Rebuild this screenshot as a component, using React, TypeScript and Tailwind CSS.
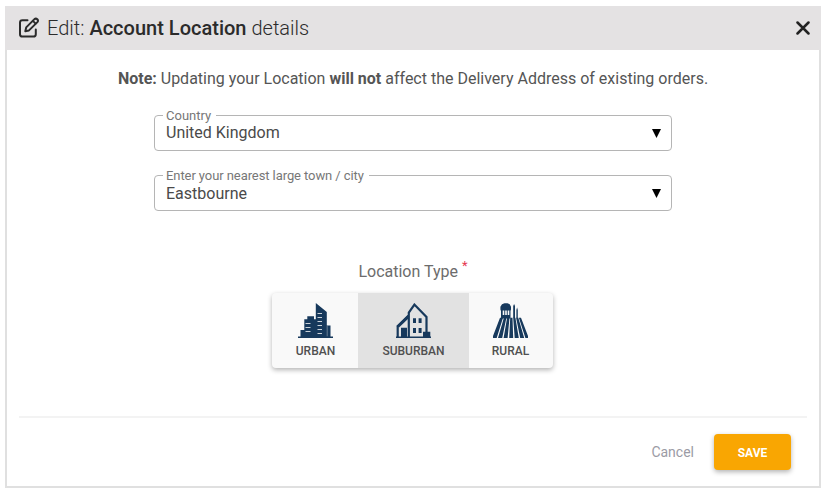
import React from 'react';

function EditIcon() {
  return (
    <svg className="h-[22px] w-[22px]" viewBox="0 0 22 22" fill="none" stroke="#2b2b2b" strokeWidth="2" strokeLinecap="round" strokeLinejoin="round">
      <path d="M9.5 3.2H4.4Q2 3.2 2 5.6V17.2Q2 19.6 4.4 19.6H15.4Q17.8 19.6 17.8 17.2V12.6" />
      <path d="M7.3 14.2L8.2 10.4L16.5 2.1Q17.9 1 19.3 2.3Q20.6 3.7 19.4 5.1L11 13.4Z" />
      <path d="M14.9 3.9L17.6 6.6" />
    </svg>
  );
}

function UrbanIcon() {
  return (
    <svg className="h-[35px] w-[35px]" viewBox="0 0 35 35">
      <path fill="#17395c" d="M0 35V33.5H2.5V27H6.3V16.3H9.3V13.3H16V16.3H17.8V0L28.8 9V22.5H32.5V33.5H35V35Z" />
      <path stroke="#f9f9f9" strokeWidth="1" opacity=".8" d="M7.5 20.5H12.5M7.5 24.5H12.5M7.5 28.5H12.5M19.5 10.5H24M19.5 14.5H24M19.5 18.5H24M19.5 22.5H24M19.5 26.5H24M19.5 30.5H24" />
      <path stroke="#f9f9f9" strokeWidth=".7" d="M29.2 23V33.3" opacity=".5" />
    </svg>
  );
}

function SuburbanIcon() {
  return (
    <svg className="h-[35px] w-[35px]" viewBox="0 0 35 35">
      <path fill="none" stroke="#17395c" strokeWidth="2.2" d="M1 23.8L12.8 12.2V9.5L18.4 1.6L30.5 14V29M1.7 23V34M12.8 11V34" />
      <path fill="#17395c" d="M0 33.4H35V35H0ZM5 24.8H11V34H5ZM27 28.7H34.3V34H27ZM17 15.2H20V20H17ZM22.6 15.2H25.6V20H22.6ZM17 25H20V30H17ZM22.6 25H25.6V30H22.6Z" />
      <path fill="#17395c" d="M1 23L13 11V15L3 24.5Z" />
    </svg>
  );
}

function RuralIcon() {
  return (
    <svg className="h-[35px] w-[35px]" viewBox="0 0 35 35">
      <path fill="#17395c" d="M7.4 6.5V3.8L9 1.2L11.5 .2H14.5L16.7 1.2L18 3.8V6.5L17.5 8V15.5H8V8Z" />
      <path stroke="#f9f9f9" strokeWidth="1.6" d="M10.5 7.5V12M13 7.5V12M15.5 7.5V12" />
      <path fill="#17395c" d="M20.2 15V3L21.1 1L22 3V15ZM23.4 15V7L24.1 4.5L24.8 7V15Z" />
      <path fill="#17395c" d="M7 14.8H10L3.7 35H0V33ZM10.9 14.8H13.4L9.2 35H5ZM14.1 14.8H16.5L14.6 35H10.6ZM17.2 14.8H19.5L20.2 35H16.2ZM20.2 14.8H22.4L25.8 35H21.7ZM23.1 14.8H25.3L31.2 35H27.2ZM25.9 14.8H28L35 33V35H32.4Z" />
    </svg>
  );
}

function SelectField({ label, value, labelClass = '', valueClass = '' }: { label: string; value: string; labelClass?: string; valueClass?: string }) {
  return (
    <div className="relative flex h-9 w-[518px] items-center justify-between rounded border border-[#b5b5b5] pr-[10px] pl-[11px]">
      <span className={`absolute -top-[9px] left-2 bg-white pr-[5px] pl-[3px] text-[13px] leading-[18px] text-[#777] ${labelClass}`}>{label}</span>
      <span className={`text-base leading-5 text-[#4a4a4a] ${valueClass}`}>{value}</span>
      <svg className="h-[9px] w-[9px]" viewBox="0 0 9 9"><path d="M0 0H9L4.5 9Z" /></svg>
    </div>
  );
}

export default function App() {
  return (
    <div className="h-[494px] w-[827px] bg-white pt-[6px] pl-[5px] font-[Roboto,sans-serif]">
      <div className="flex h-[482px] w-[816px] flex-col border-2 border-[#e0e0e0]">
        <header className="-mx-0.5 -mt-0.5 flex h-11 shrink-0 items-center bg-[#e4e2e3] pr-[11px] pl-[13px]">
          <EditIcon />
          <h1 className="ml-[7px] text-xl font-light tracking-[0.01px] text-[#2b2b2b]">
            Edit: <b className="font-medium">Account Location</b> details
          </h1>
          <svg className="ml-auto h-[14px] w-[14px]" viewBox="0 0 14 14" stroke="#222" strokeWidth="2.5" strokeLinecap="round"><path d="M1.5 1.5L12.5 12.5M12.5 1.5L1.5 12.5" /></svg>
        </header>
        <main className="flex flex-col items-center">
          <p className="mt-[17px] text-base leading-6 text-[#555]">
            <b>Note:</b> Updating your Location <b>will not</b> affect the Delivery Address of existing orders.
          </p>
          <div className="mt-6 flex flex-col gap-6">
            <SelectField label="Country" value="United Kingdom" />
            <SelectField label="Enter your nearest large town / city" value="Eastbourne" labelClass="tracking-[-0.08px]" valueClass="pt-[2px]" />
          </div>
          <div className="mt-[49px] flex h-6 text-base leading-6 text-[#6c6c6c]">
            Location Type<span className="ml-1 -mt-[6px] text-[13px] text-[#e53950]">*</span>
          </div>
          <div className="mt-[9px] mr-[2px] flex h-[75px] overflow-hidden rounded bg-[#f9f9f9] text-xs font-medium text-[#505050] shadow-[0_2px_5px_rgba(0,0,0,0.3)]">
            <button className="flex w-[86px] flex-col items-center pt-[10px] pl-px"><UrbanIcon /><span className="mt-[5px] ml-px leading-4">URBAN</span></button>
            <button className="flex w-[111px] flex-col items-center bg-[#e2e2e2] pt-[10px]"><SuburbanIcon /><span className="mt-[5px] ml-px leading-4">SUBURBAN</span></button>
            <button className="flex w-[84px] flex-col items-center pt-[10px]"><RuralIcon /><span className="mt-[5px] leading-4">RURAL</span></button>
          </div>
        </main>
        <footer className="mx-3 mt-auto flex h-[70px] shrink-0 items-center justify-end border-t-2 border-[#f3f3f3] pr-4">
          <button className="mr-5 text-sm text-[#9b9ba5]">Cancel</button>
          <button className="h-9 w-[77px] rounded bg-[#f9a602] pt-px text-xs font-bold text-white shadow-[0_2px_5px_rgba(0,0,0,0.3)]">SAVE</button>
        </footer>
      </div>
    </div>
  );
}
